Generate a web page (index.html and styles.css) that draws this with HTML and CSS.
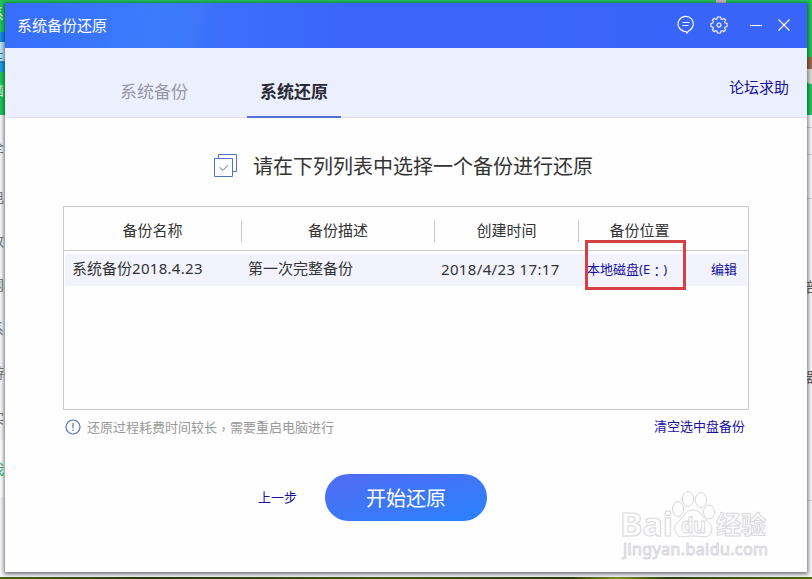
FILE: index.html
```html
<!DOCTYPE html>
<html lang="zh-CN">
<head>
<meta charset="utf-8">
<title>系统备份还原</title>
<link rel="stylesheet" href="styles.css">
</head>
<body>
<div class="desktop">
  <div class="backdrop" aria-hidden="true">
    <div class="bg-green"></div>
    <div class="bg-tab"></div>
    <div class="bg-side"></div>
    <div class="bg-rule r1"></div>
    <div class="bg-rule r2"></div>
    <div class="bg-rule r3"></div>
    <div class="bg-rule r4"></div>
    <div class="bg-ground"></div>
    <div class="bg-dot"></div>
    <div class="bg-figure"></div>
    <span class="frag light f1">系</span>
    <span class="frag light f2">主</span>
    <span class="frag light f3">脑</span>
    <span class="frag f4">全</span>
    <span class="frag f5">电</span>
    <span class="frag f6">数</span>
    <span class="frag f7">网</span>
    <span class="frag f8">系</span>
    <span class="frag f9">游</span>
    <span class="frag f10">实</span>
    <span class="frag green f11">我</span>
    <span class="frag right f12">部</span>
    <span class="frag right f13">器</span>
  </div>

  <main class="window">
    <header class="titlebar">
      <h1>系统备份还原</h1>
      <div class="controls">
        <svg class="ic-chat" width="18" height="20" viewBox="0 0 18 20"><path d="M7.200 16.400A7.600 7.600 0 1 1 11.500 16L9.800 18.200L9 16.600Z M5.500 7.500H12.500 M5.500 10.500H11.500"/></svg>
        <svg class="ic-gear" width="18" height="18" viewBox="0 0 18 18"><path d="M7.300 1H10.700L11 2.900L12.300 3.500L14 2.400L15.700 4.100L14.500 5.700L15.100 7L17 7.300V10.700L15.100 11L14.500 12.300L15.700 13.900L13.900 15.700L12.300 14.500L11 15.100L10.700 17H7.300L7 15.100L5.700 14.500L4.100 15.700L2.300 13.900L3.500 12.300L2.900 11L1 10.700V7.300L2.900 7L3.500 5.700L2.300 4.100L4.100 2.300L5.700 3.500L7 2.900Z"/><circle cx="9" cy="9" r="2"/></svg>
        <svg class="ic-min" width="12" height="12" viewBox="0 0 12 12"><path d="M0 6.500H12"/></svg>
        <svg class="ic-close" width="12" height="12" viewBox="0 0 12 12"><path d="M.5.5 11.500 11.500M11.500.5.5 11.500"/></svg>
      </div>
    </header>

    <nav class="tabs">
      <a class="tab">系统备份</a>
      <a class="tab active">系统还原</a>
      <a class="link forum">论坛求助</a>
    </nav>

    <section class="heading">
      <svg width="24" height="24" viewBox="0 0 24 24"><path d="M.5 4.500h18v18H.5Z M4.500 4V.5h18v17H19 M5.500 13.200l3.400 3.200 5-5"/></svg>
      <h2>请在下列列表中选择一个备份进行还原</h2>
    </section>

    <section class="table">
      <div class="thead">
        <span class="th">备份名称</span>
        <span class="th">备份描述</span>
        <span class="th">创建时间</span>
        <span class="th">备份位置</span>
      </div>
      <div class="row">
        <span class="name">系统备份<span class="num">2018.4.23</span></span>
        <span class="desc">第一次完整备份</span>
        <span class="time">2018/4/23 17:17</span>
        <span class="disk link">本地磁盘(E<span class="mid" lang="zh-TW">：</span>)</span>
        <span class="edit link">编辑</span>
        <div class="marker"></div>
      </div>
    </section>

    <div class="notes">
      <svg width="16" height="16" viewBox="0 0 16 16"><circle cx="8" cy="8" r="7"/><path d="M8 4V9.200M8 10.600V12"/></svg>
      <span class="hint">还原过程耗费时间较长<span class="mid" lang="zh-TW">，</span>需要重启电脑进行</span>
      <a class="link clear">清空选中盘备份</a>
    </div>

    <div class="actions">
      <a class="link">上一步</a>
      <button>开始还原</button>
    </div>

    <svg class="watermark" width="150" height="76" viewBox="0 0 150 76">
      <ellipse cx="71" cy="14" rx="5.700" ry="7.500"/>
      <ellipse cx="84" cy="15" rx="5.700" ry="7.500"/>
      <ellipse cx="61" cy="24" rx="5.500" ry="7.500"/>
      <ellipse cx="92" cy="27" rx="5.500" ry="7"/>
      <path d="M76 25c7 0 9 6 13 10 6 4 7 8 5 13-3 6-9 3-18 3s-14 3-17-3c-3-5-1-9 4-13 4-4 6-10 13-10Z"/>
      <text class="wm-logo" x="3" y="51" textLength="53" lengthAdjust="spacingAndGlyphs">Bai</text>
      <text class="wm-logo wm-du" x="64" y="48" textLength="25" lengthAdjust="spacingAndGlyphs">du</text>
      <text class="wm-logo wm-cjk" x="99" y="49" textLength="50">经验</text>
      <text class="wm-logo wm-url" x="6" y="70" textLength="145">jingyan.baidu.com</text>
    </svg>
  </main>
</div>
</body>
</html>
```
FILE: styles.css
```css
* { box-sizing: border-box; }

body {
  margin: 0;
  font-family: "Noto Sans", "Noto Sans CJK SC", sans-serif;
  color: #333;
}

h1, h2 { margin: 0; font-weight: 400; }

svg { display: block; fill: none; flex: none; }

.desktop {
  position: relative;
  width: 812px;
  height: 579px;
  padding: 3px 5px 7px;
  overflow: hidden;
  background: #f5f5fa;
}

/* Programs and wallpaper visible around the window */
.backdrop, .backdrop > * { position: absolute; }
.backdrop { inset: 0; }
.bg-green { inset: 0 0 auto; height: 115px; background: #20c45e; }
.bg-tab { left: 0; top: 32px; width: 8px; height: 40px; background: linear-gradient(#1688e8 10px, #b9e4f4 10px 29px, #1e9ee8 29px); }
.bg-side { left: 0; top: 440px; width: 8px; height: 57px; background: #fff; }
.bg-rule { right: 0; width: 8px; height: 1px; background: #ccccd2; }
.r1 { top: 127px; }
.r2 { top: 154px; }
.r3 { top: 198px; }
.r4 { top: 500px; }
.bg-ground { inset: auto 0 0; height: 2px; background: linear-gradient(90deg, #4b650f, #263b0a 18%, #415b12 48%, #263c08 70%, #7d9226 76%, #294306 82%, #4c6d12); }
.bg-dot { left: 716px; top: 0; width: 10px; height: 3px; background: #c9b6cc; }
.bg-figure { left: 806px; top: 57px; width: 6px; height: 27px; border-radius: 5px 0 0 5px; background: linear-gradient(#9a684a 12px, #d7ddd2 12px); }

.frag { left: -10px; width: 15px; font-size: 14px; line-height: 16px; color: #777; }
.frag.light { color: #d9f8df; }
.frag.green { color: #22b14c; }
.frag.right { left: 806px; color: #666; }
.f1 { top: 6px; }
.f2 { top: 49px; }
.frag.f2 { color: #1773b8; }
.f3 { top: 82px; }
.f4 { top: 139px; }
.f5 { top: 189px; }
.f6 { top: 233px; }
.f7 { top: 277px; }
.f8 { top: 321px; }
.f9 { top: 365px; }
.f10 { top: 410px; }
.f11 { top: 461px; }
.f12 { top: 279px; }
.f13 { top: 369px; }

.window {
  position: relative;
  width: 802px;
  height: 569px;
  background: #fefefe;
  box-shadow: 0 1px 4px 1px rgba(0, 0, 0, .55);
}

.titlebar {
  display: flex;
  align-items: center;
  justify-content: space-between;
  height: 45px;
  padding: 0 17px 2px 12px;
  background:
    linear-gradient(108deg, rgba(255, 255, 255, 0) 60px, rgba(255, 255, 255, .025) 188px, transparent 200px),
    linear-gradient(90deg, #376efb 0, #387afc 150px, #3b6ffa 215px, #3b65fa 340px, #3964fa);
  color: #fff;
}
.titlebar h1 { font-size: 15px; line-height: 20px; }

.controls { display: flex; align-items: center; stroke: #fff; stroke-width: 1.1; }
.ic-gear { margin-left: 15px; stroke-linejoin: round; }
.ic-min { margin-left: 22px; }
.ic-close { margin-left: 16px; }

.tabs {
  display: flex;
  height: 70px;
  padding: 0 18px 0 99px;
  background: #eceffe;
  border-bottom: 1px solid #dfe0ea;
}
.tab {
  width: 100px;
  margin-right: 43px;
  padding: 0 0 0 16px;
  height: 70px;
  font-size: 17px;
  line-height: 88px;
  color: #9796a3;
}
.tab.active {
  width: 94px;
  margin-right: 0;
  padding-left: 13px;
  font-weight: 700;
  color: #292a35;
  border-bottom: 2px solid #5470d0;
}
.forum { margin-left: auto; font-size: 15px; line-height: 78px; }
.link { color: #16109b; }

.heading {
  display: flex;
  align-items: center;
  height: 88px;
  padding: 8px 0 0 209px;
}
.heading svg { margin-right: 15px; stroke: #5273b8; }
.heading h2 { padding-top: 2px; font-size: 20px; line-height: 28px; }

.table {
  width: 686px;
  height: 204px;
  margin-left: 58px;
  border: 1px solid #c9c8d0;
  font-size: 15px;
}
.thead {
  display: grid;
  grid-template-columns: 178px 193px 144px 121px;
  height: 44px;
  padding-top: 13px;
  border-bottom: 1px solid #c9c8d0;
}
.th {
  height: 22px;
  line-height: 20px;
  text-align: center;
  border-right: 1px solid #c9c8d0;
}
.th:last-child { border: 0; }

.row {
  position: relative;
  display: grid;
  grid-template-columns: 176px 193px 146px 124px 36px;
  height: 32px;
  margin: 3px 1px 0;
  padding-left: 7px;
  line-height: 29px;
  white-space: nowrap;
  background: #f2f3fd;
}
.num { letter-spacing: .3px; }
.time { letter-spacing: .35px; line-height: 30px; }
.disk, .edit { font-size: 13px; line-height: 30px; }
/* Full-width punctuation centred in its cell */
.mid {
  position: relative;
  top: 2px;
  display: inline-block;
  width: 1em;
  font-family: "Noto Sans CJK TC", sans-serif;
  line-height: 1;
  text-spacing-trim: space-all;
}
.marker {
  position: absolute;
  left: 520px;
  top: -14px;
  width: 101px;
  height: 50px;
  border: 3px solid #d63f43;
}

.notes {
  display: flex;
  align-items: center;
  height: 34px;
  padding: 0 62px 0 60px;
  font-size: 13px;
}
.notes svg { margin-right: 6px; stroke: #5170b8; stroke-width: 1.2; }
.hint { line-height: 18px; color: #999; }
.clear { margin: -4px 0 0 auto; }

.actions {
  display: flex;
  align-items: center;
  height: 47px;
  margin-top: 30px;
  padding-left: 253px;
  font-size: 13px;
}
.actions .link { margin-top: -2px; }
.actions button {
  width: 162px;
  height: 47px;
  margin-left: 28px;
  padding: 0;
  border: 0;
  border-radius: 24px;
  background: linear-gradient(165deg, #4e6df4 10%, #2d80fc 90%);
  color: #fff;
  font: 20px "Noto Sans", "Noto Sans CJK SC", sans-serif;
}

.watermark {
  position: absolute;
  left: 612px;
  top: 482px;
  overflow: visible;
  stroke: #d8d8dc;
  stroke-width: 1;
  fill: #fefefe;
}
.wm-logo { font: 700 33px "Noto Sans", "Noto Sans CJK SC", sans-serif; }
.wm-du { font-size: 21px; }
.wm-cjk { font-size: 25px; }
.wm-url { font-size: 16px; font-weight: 400; }
```
